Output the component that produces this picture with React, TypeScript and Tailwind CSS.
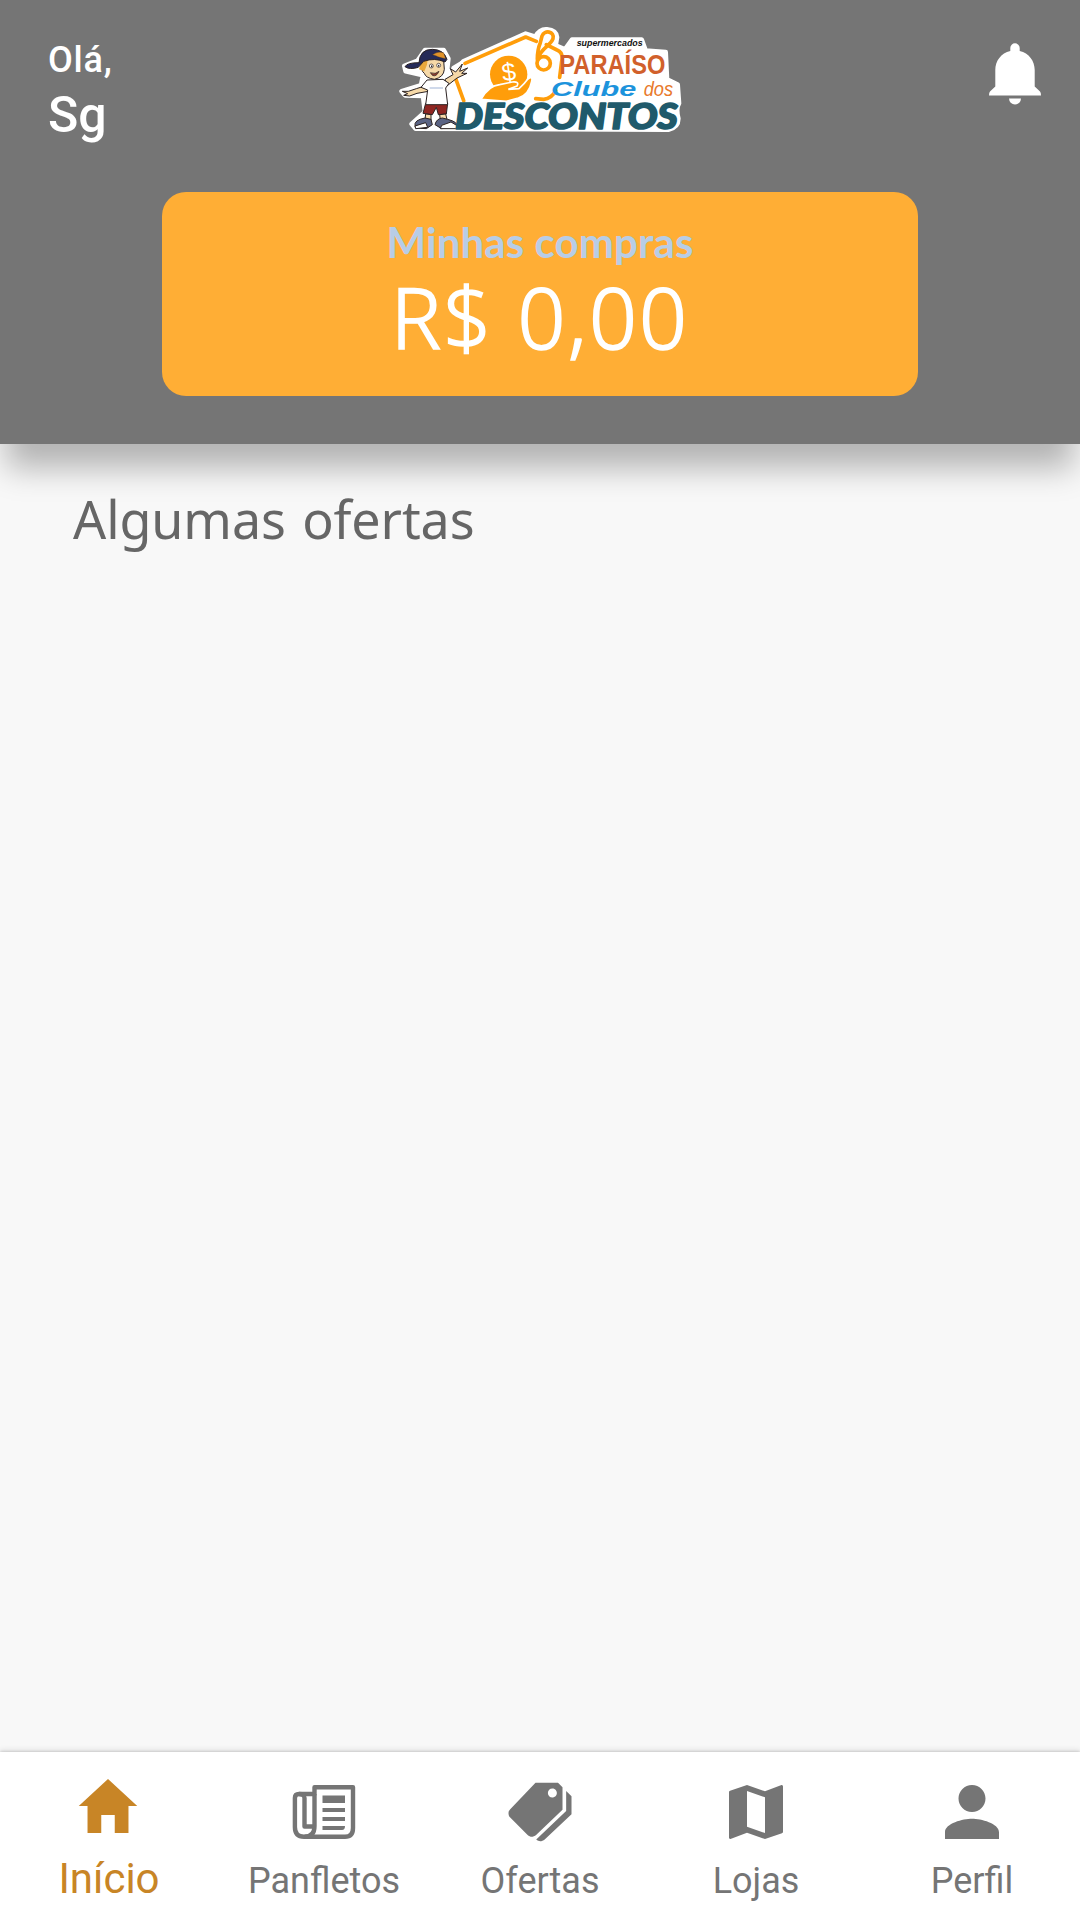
import type { ReactNode } from 'react';
import { IoMdHome, IoMdMap, IoMdPerson, IoMdPricetags } from 'react-icons/io';

function Logo() {
    return (
        <svg width="300" height="120" viewBox="-15 -6 900 360" aria-label="Clube dos Descontos">
            {/* white sticker edge */}
            <g fill="#fff" stroke="#fff" strokeWidth="14" strokeLinejoin="round">
                <path d="M180 150 L205 118 L392 35 L421 44 Q434 20 456 22 Q484 24 486 46 L482 70 L510 82 L531 53 L740 53 L752 86 L812 90 L816 172 L848 188 L852 244 Q842 258 850 290 Q850 316 820 323 L62 320 L50 306 L90 270 L84 222 L30 220 L20 208 L78 190 L84 160 L32 148 L28 132 L68 116 L90 84 L146 84 L160 110 L156 146 Z" />
                <path d="M176 138 L206 120 L216 142 L190 170 L160 186 Z" />
            </g>

            {/* price tag house and its string */}
            <g fill="none" stroke="#ff9d0a" strokeWidth="11" strokeLinecap="round" strokeLinejoin="round">
                <path d="M182 170 L206 236 M210 124 L392 45 L424 58 M454 68 L486 84 Q506 92 500 118 L494 166" />
                <path d="M482 206 Q470 230 446 232 L422 230" />
                <circle cx="446" cy="124" r="20" />
                <path d="M427 112 C427 92 430 76 436 62 L441 42 C448 22 480 28 474 50 C468 68 444 78 434 98" />
            </g>

            {/* hand holding the coin */}
            <circle cx="341" cy="157" r="56" fill="#ff9d0a" />
            <path
                d="M258 232 Q282 190 314 188 L352 180 Q374 178 366 192 L340 202 L372 200 Q388 186 398 172 Q414 160 410 178 Q402 218 370 228 L334 238 Z"
                fill="#ff9d0a"
                stroke="#fff"
                strokeWidth="5"
            />
            <text x="341" y="176" textAnchor="middle" fontFamily="Liberation Sans" fontSize="76" fill="#fff" transform="rotate(-8 341 150)">$</text>

            {/* mascot */}
            <g stroke="#2b2222" strokeWidth="3" strokeLinejoin="round">
                <path d="M102 188 L64 200 L40 208 L22 208 L38 215 L26 220 L44 222 L66 214 L100 208 Z" fill="#f6d9a8" />
                <path d="M150 172 L174 158 L166 140 L182 150 L202 126 L194 148 L218 138 L200 154 L216 154 L186 168 L158 190 Z" fill="#f6d9a8" />
                <path d="M92 244 L158 244 L154 276 L130 278 L124 256 L112 278 L84 274 Z" fill="#8f2622" />
                <path d="M92 276 L108 278 L108 294 L90 292 Z M134 278 L152 276 L156 292 L136 294 Z" fill="#f6d9a8" />
                <path d="M96 174 L144 172 L162 184 L152 198 L158 248 L92 248 L98 204 L78 196 Z" fill="#fff" />
                <path d="M104 198 H144" stroke="#9fb3d6" fill="none" />
                <path d="M84 126 Q92 110 120 108 L146 116 L148 142 Q146 166 118 172 Q92 168 88 154 Q76 146 84 126 Z" fill="#f6d9a8" />
                <path d="M72 142 L78 122 L98 112 L96 128 L88 148 Z" fill="#e9a83c" stroke="none" />
                <path d="M72 122 Q74 82 112 82 Q146 82 156 112 L150 120 Q120 106 86 118 L70 136 Q44 144 30 134 Q36 122 72 122 Z" fill="#252a58" />
                <path d="M112 98 Q128 86 146 92 L152 110 Q130 106 124 102 Z" fill="#e0922a" strokeWidth="1" />
                <path d="M106 152 Q122 158 132 148 Q124 166 112 160 Z" fill="#8a3a2c" strokeWidth="2" />
                <g fill="#fff" strokeWidth="2">
                    <circle cx="109" cy="132" r="6" />
                    <circle cx="131" cy="130" r="6" />
                </g>
                <path d="M110 132 V134 M131 130 V132" strokeWidth="4" strokeLinecap="round" />
                <path d="M60 312 Q56 294 90 288 L108 292 L112 308 L94 320 L62 318 Z" fill="#5a6384" />
                <path d="M120 308 Q124 290 142 288 L158 292 Q190 300 186 314 L140 320 Z" fill="#5a6384" />
                <path d="M60 312 L92 302 L98 316 L62 320 Z M140 310 L168 300 L188 312 L182 320 L136 320 Z" fill="#fff" />
            </g>

            {/* lettering */}
            <g fontFamily="'Liberation Sans', sans-serif">
                <text x="545" y="73" fontSize="26" fontWeight="700" fontStyle="italic" fill="#111" textLength="198" lengthAdjust="spacingAndGlyphs">supermercados</text>
                <text x="493" y="155" fontSize="81" fontWeight="700" fill="#d1602b" textLength="318" lengthAdjust="spacingAndGlyphs">PARAÍSO</text>
                <text x="468" y="221" fontSize="61" fontWeight="700" fontStyle="italic" fill="#1c93dc" textLength="256" lengthAdjust="spacingAndGlyphs">Clube</text>
                <text x="746" y="221" fontSize="58" fontStyle="italic" fill="#e8792b" textLength="88" lengthAdjust="spacingAndGlyphs">dos</text>
            </g>
            <text
                x="180"
                y="320"
                fontFamily="Lato, sans-serif"
                fontSize="108"
                fontWeight="900"
                fontStyle="italic"
                fill="#205a6b"
                stroke="#205a6b"
                strokeWidth="5"
                strokeLinejoin="round"
                textLength="668"
                lengthAdjust="spacingAndGlyphs"
            >
                DESCONTOS
            </text>
        </svg>
    );
}

function BellIcon() {
    return (
        <svg width="52" height="62" viewBox="0 0 52 62" fill="currentColor">
            <path d="M21.3 8 V5 A4.7 4.7 0 0 1 30.7 5 V8 C40 10 45.7 18 45.7 27 V43.5 L51 48.5 Q52 49.5 52 52.6 H0 Q0 49.5 1 48.5 L6.3 43.5 V27 C6.3 18 12 10 21.3 8 Z" />
            <path d="M20 55.5 H32 A6 6 0 0 1 20 55.5 Z" />
        </svg>
    );
}

function NewspaperIcon() {
    return (
        <svg width="64" height="72" viewBox="0 0 64 72">
            <g fill="none" stroke="currentColor" strokeWidth="4.4" strokeLinejoin="round">
                <path d="M22.5 11.2 H61 V52 Q61 60.8 53 60.8 H12 Q2.9 60.8 2.9 51 V22 Q2.9 18 7 18 H22.5 Z" />
                <path d="M22.5 18 V50 Q22.5 60.8 12.5 60.8" />
                <path d="M7 18 Q12.5 18 12.5 22 V50.5 H22.5" />
            </g>
            <path d="M30.5 19.5 H53 V27 H30.5 Z M30.5 32 H53 V36 H30.5 Z M30.5 41 H53 V45 H30.5 Z M30.5 50 H53 Q53 54 50 54 H30.5 Z" fill="currentColor" />
        </svg>
    );
}

function Tab({ label, icon, active = false }: { label: string; icon: ReactNode; active?: boolean }) {
    return (
        <button className={`flex flex-1 flex-col items-center ${active ? 'pt-[18px] text-[#c88526]' : 'pt-6 text-[#757575]'}`}>
            <span className="flex h-[72px] items-center text-[72px]">{icon}</span>
            <span className={active ? 'mt-[13px] ml-0.5 text-[42px] leading-[48px]' : 'mt-3 text-[36px] leading-[42px]'}>{label}</span>
        </button>
    );
}

export default function App() {
    return (
        <div className="flex h-[1920px] w-[1080px] flex-col overflow-hidden bg-[#f8f8f8] font-['Roboto',sans-serif]">
            <header className="h-[444px] shrink-0 bg-[#757575] text-white shadow-[0_30px_30px_-6px_rgba(0,0,0,0.28)]">
                <div className="flex h-48 items-start justify-between pt-5">
                    <div className="w-[390px] pt-[19px] pl-12 font-medium">
                        <p className="text-[36px] leading-[42px] tracking-[0.8px]">Olá,</p>
                        <p className="text-[50px] leading-[68px]">Sg</p>
                    </div>
                    <Logo />
                    <div className="flex w-[390px] justify-end pt-[22.5px] pr-[39px]">
                        <BellIcon />
                    </div>
                </div>
                <div className="mx-auto flex h-[204px] w-[756px] flex-col items-center rounded-3xl bg-[#ffae35] pt-[23px] font-['Lato',sans-serif]">
                    <p className="text-[42px] leading-[54px] font-bold tracking-[0.1px] text-[#b8cde6]">Minhas compras</p>
                    <p className="font-['Noto_Sans',sans-serif] text-[84px] leading-[96px] font-light tracking-[2.2px] [-webkit-text-stroke:1.6px_white]">R$ 0,00</p>
                </div>
            </header>

            <main className="flex-1 px-[73px] pt-10">
                <h2 className="font-['Noto_Sans',sans-serif] text-[52px] leading-[70px] tracking-[-0.1px] text-[#666] [word-spacing:3px]">Algumas ofertas</h2>
            </main>

            <nav className="flex h-[168px] shrink-0 bg-white shadow-[0_-1px_2px_rgba(0,0,0,0.12),0_-3px_5px_rgba(0,0,0,0.07)]">
                <Tab label="Início" icon={<IoMdHome />} active />
                <Tab label="Panfletos" icon={<NewspaperIcon />} />
                <Tab label="Ofertas" icon={<IoMdPricetags />} />
                <Tab label="Lojas" icon={<IoMdMap />} />
                <Tab label="Perfil" icon={<IoMdPerson />} />
            </nav>
        </div>
    );
}
